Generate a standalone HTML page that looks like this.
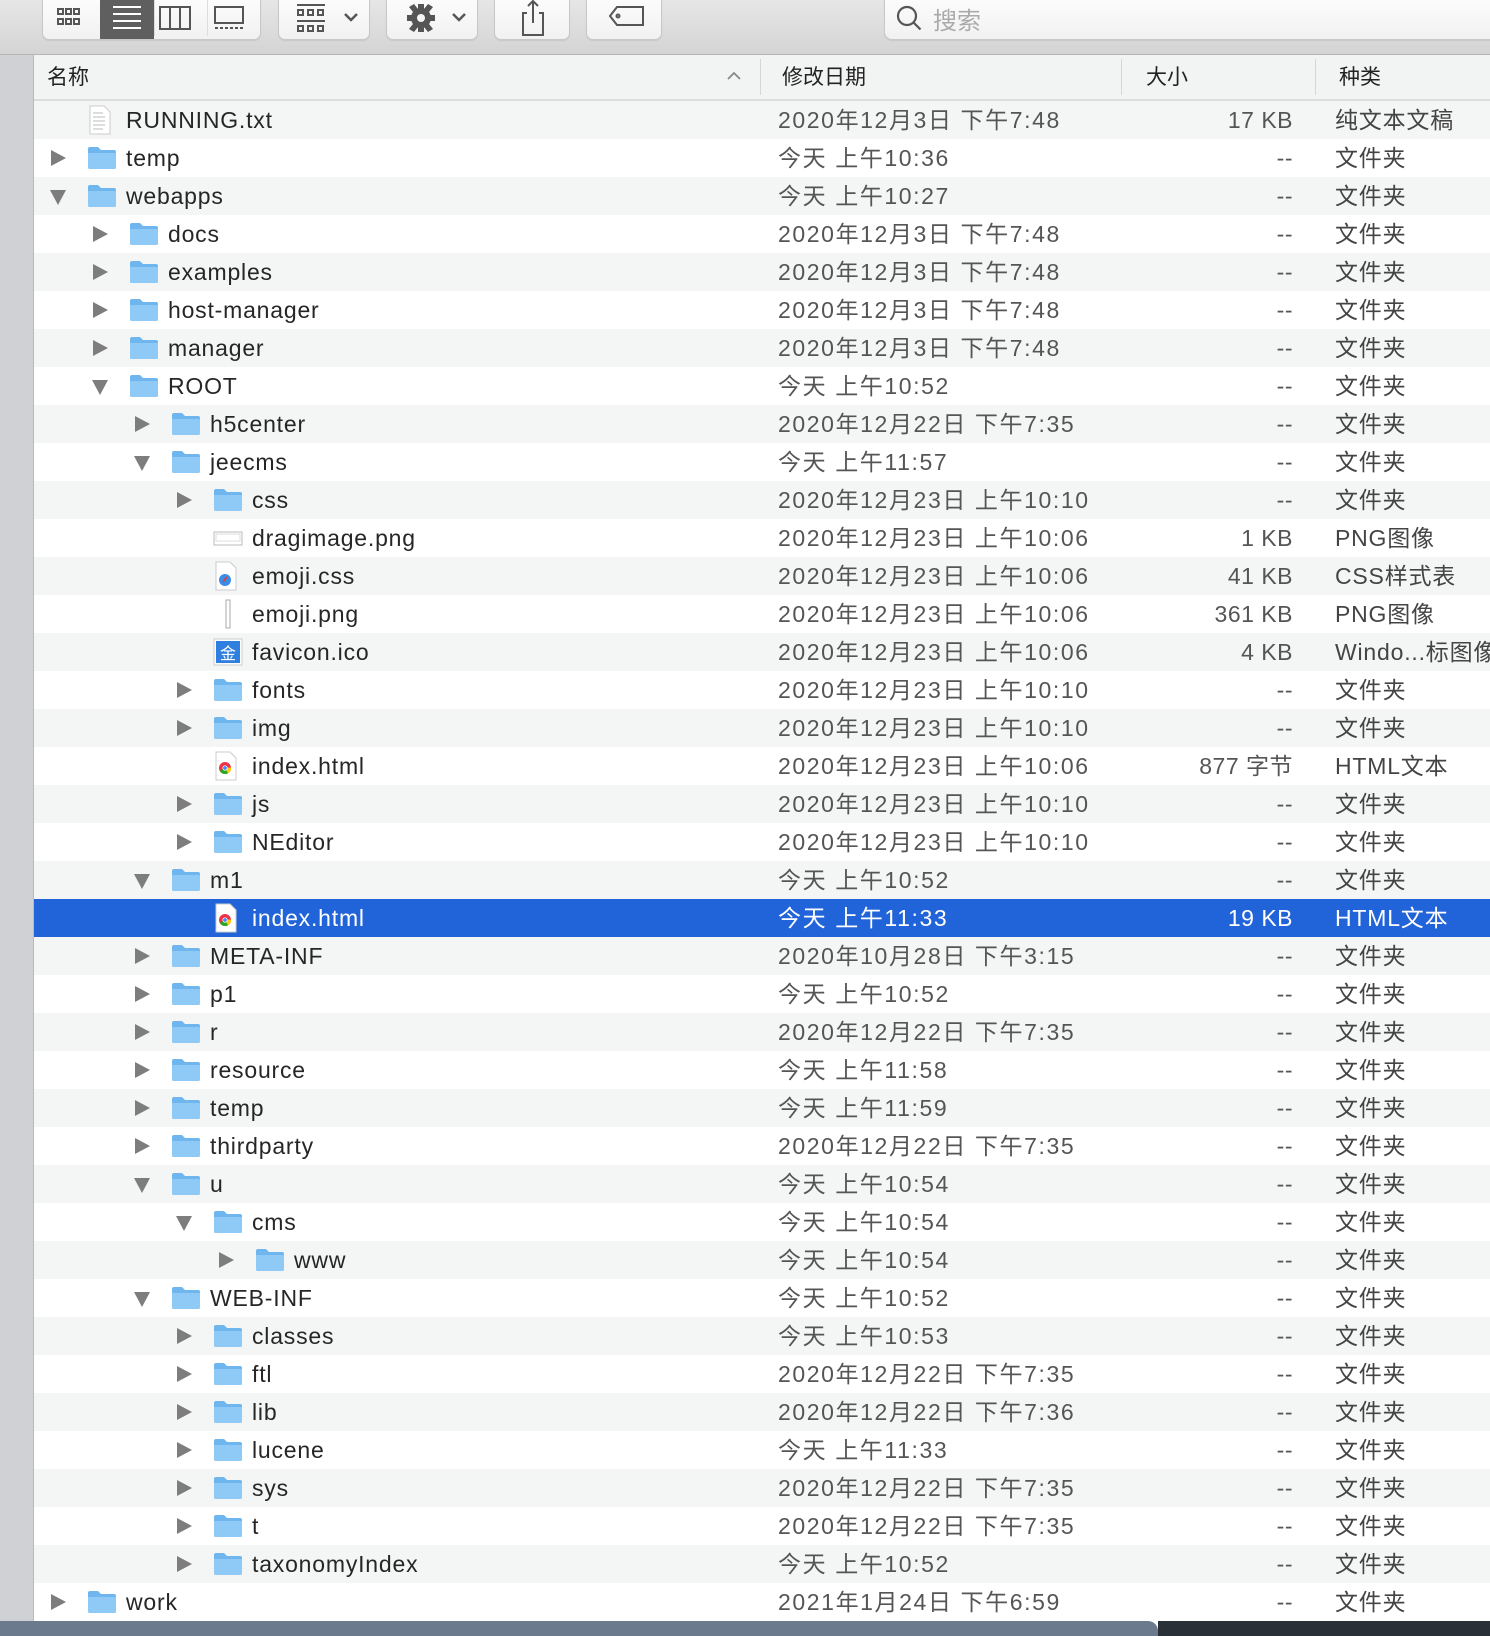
<!DOCTYPE html>
<html><head><meta charset="utf-8"><style>
*{margin:0;padding:0;box-sizing:border-box}
body{width:1490px;height:1636px;overflow:hidden;position:relative;background:#fff;font-family:"Liberation Sans","Noto Sans CJK SC",sans-serif;}
#tb{position:absolute;left:0;top:0;width:1490px;height:55px;background:linear-gradient(#e6e6e6,#d4d4d4);border-bottom:1px solid #b5b5b5}
.btn{position:absolute;top:-4px;height:44px;background:linear-gradient(#fdfdfd,#f1f1f1);border:1px solid #c8c8c8;border-top:none;border-radius:0 0 7px 7px;box-shadow:0 1px 1px rgba(0,0,0,.08)}
#side{position:absolute;left:0;top:55px;width:34px;height:1566px;background:#cfd1d4;border-right:1px solid #b9b9b9}
#hdr{position:absolute;left:34px;top:55px;width:1456px;height:46px;background:#f2f3f3;border-bottom:2px solid #dcdcdc;font-size:21px;color:#222}
#hdr span{position:absolute;top:10px;line-height:26px}
.sep{position:absolute;top:4px;width:1px;height:36px;background:#d6d6d6}
.row{position:absolute;left:34px;width:1456px;height:38px;font-size:23px;color:#262626}
.row.g{background:#f4f5f5}
.row.sel{background:#2163d8;color:#fff}
.row span{position:absolute;top:6px;white-space:nowrap;line-height:26px;height:26px}
.n{letter-spacing:0.8px}
.d{left:744px;color:#555;letter-spacing:1.6px}
.s{right:197px;color:#555;text-align:right;letter-spacing:0.5px}
.k{left:1301px;color:#444;letter-spacing:0.8px}
.sel .d,.sel .s,.sel .k{color:#fff}
.tri{position:absolute;top:11px;width:0;height:0}
.tr{border-left:15px solid #7d7d7d;border-top:8px solid transparent;border-bottom:8px solid transparent}
.td{border-top:15px solid #7d7d7d;border-left:8px solid transparent;border-right:8px solid transparent;top:13px}
.fold{position:absolute;top:7px;width:30px;height:24px}
#dock{position:absolute;left:0;top:1621px;width:1158px;height:15px;background:#6b7a8c;border-radius:0 10px 0 0}
#dbg{position:absolute;left:1158px;top:1621px;width:332px;height:15px;background:#2a3038}
</style></head><body>
<div id="tb">
 <div class="btn" style="left:42px;width:219px;overflow:hidden">
  <div style="position:absolute;left:57px;top:0;width:54px;height:44px;background:#5f5f5f"></div>
  <div style="position:absolute;left:111px;top:4px;width:1px;height:36px;background:#ddd"></div>
  <div style="position:absolute;left:164px;top:4px;width:1px;height:36px;background:#ddd"></div>
  <svg style="position:absolute;left:0;top:0" width="219" height="44" fill="none" stroke="#555" stroke-width="2">
   <g><rect x="15" y="13" width="5" height="5"/><rect x="23" y="13" width="5" height="5"/><rect x="31" y="13" width="5" height="5"/><rect x="15" y="23" width="5" height="5"/><rect x="23" y="23" width="5" height="5"/><rect x="31" y="23" width="5" height="5"/></g>
   <g stroke="#fff"><path d="M70 11h28M70 18h28M70 25h28M70 32h28"/></g>
   <rect x="117" y="11" width="30" height="22"/><path d="M127 11v22M137 11v22"/>
   <rect x="172" y="11" width="28" height="16"/><path d="M172 32h28" stroke-dasharray="3 2"/>
  </svg>
 </div>
 <div class="btn" style="left:278px;width:92px">
  <svg width="92" height="44" fill="none" stroke="#555" stroke-width="2"><path d="M18 9h28M18 25h28"/><rect x="19" y="14" width="5" height="5"/><rect x="29" y="14" width="5" height="5"/><rect x="39" y="14" width="5" height="5"/><rect x="19" y="30" width="5" height="5"/><rect x="29" y="30" width="5" height="5"/><rect x="39" y="30" width="5" height="5"/><path d="M66 18l6 6 6-6" stroke-width="2.5"/></svg>
 </div>
 <div class="btn" style="left:386px;width:92px">
  <svg width="92" height="44"><g fill="#555"><circle cx="34" cy="22" r="10"/><path d="M31 8h6v6h-6zM31 30h6v6h-6zM20 19h6v6h-6zM42 19h6v6h-6zM22 11l5-3 4 5-5 3zM46 11l-5-3-4 5 5 3zM22 33l5 3 4-5-5-3zM46 33l-5 3-4-5 5-3z"/></g><circle cx="34" cy="22" r="4" fill="#f5f5f5"/><path d="M66 18l6 6 6-6" fill="none" stroke="#555" stroke-width="2.5"/></svg>
 </div>
 <div class="btn" style="left:494px;width:76px">
  <svg width="76" height="44" fill="none" stroke="#555" stroke-width="2"><path d="M32 17h-4v22h20v-22h-4M38 5v22M33 10l5-5 5 5"/></svg>
 </div>
 <div class="btn" style="left:586px;width:76px">
  <svg width="76" height="44" fill="none" stroke="#555" stroke-width="2"><path d="M30 11h26v18h-26l-7-9z"/><circle cx="31" cy="20" r="1.5"/></svg>
 </div>
 <div class="btn" style="left:884px;width:620px;border-radius:0 0 8px 8px">
  <svg style="position:absolute;left:10px;top:8px" width="30" height="30" fill="none" stroke="#555" stroke-width="2.2"><circle cx="12" cy="12" r="9"/><path d="M18.5 18.5l7 7"/></svg>
  <span style="position:absolute;left:48px;top:5px;font-size:24px;color:#aaa">搜索</span>
 </div>
</div>
<div id="side"></div>
<div id="hdr">
 <span style="left:13px">名称</span>
 <svg style="position:absolute;left:693px;top:16px" width="14" height="10" fill="none" stroke="#888" stroke-width="1.8"><path d="M1 8l6-6 6 6"/></svg>
 <div class="sep" style="left:726px"></div><span style="left:748px">修改日期</span>
 <div class="sep" style="left:1087px"></div><span style="left:1112px">大小</span>
 <div class="sep" style="left:1281px"></div><span style="left:1305px">种类</span>
</div>
<div id="rows"></div>
<div id="dock"></div><div id="dbg"></div>
<script>
var F='文件夹';
var R=[
[0,'','txt','RUNNING.txt','2020年12月3日 下午7:48','17 KB','纯文本文稿'],
[0,'r','f','temp','今天 上午10:36','--',F],
[0,'d','f','webapps','今天 上午10:27','--',F],
[1,'r','f','docs','2020年12月3日 下午7:48','--',F],
[1,'r','f','examples','2020年12月3日 下午7:48','--',F],
[1,'r','f','host-manager','2020年12月3日 下午7:48','--',F],
[1,'r','f','manager','2020年12月3日 下午7:48','--',F],
[1,'d','f','ROOT','今天 上午10:52','--',F],
[2,'r','f','h5center','2020年12月22日 下午7:35','--',F],
[2,'d','f','jeecms','今天 上午11:57','--',F],
[3,'r','f','css','2020年12月23日 上午10:10','--',F],
[3,'','png','dragimage.png','2020年12月23日 上午10:06','1 KB','PNG图像'],
[3,'','css','emoji.css','2020年12月23日 上午10:06','41 KB','CSS样式表'],
[3,'','bar','emoji.png','2020年12月23日 上午10:06','361 KB','PNG图像'],
[3,'','ico','favicon.ico','2020年12月23日 上午10:06','4 KB','Windo...标图像'],
[3,'r','f','fonts','2020年12月23日 上午10:10','--',F],
[3,'r','f','img','2020年12月23日 上午10:10','--',F],
[3,'','html','index.html','2020年12月23日 上午10:06','877 字节','HTML文本'],
[3,'r','f','js','2020年12月23日 上午10:10','--',F],
[3,'r','f','NEditor','2020年12月23日 上午10:10','--',F],
[2,'d','f','m1','今天 上午10:52','--',F],
[3,'','html','index.html','今天 上午11:33','19 KB','HTML文本'],
[2,'r','f','META-INF','2020年10月28日 下午3:15','--',F],
[2,'r','f','p1','今天 上午10:52','--',F],
[2,'r','f','r','2020年12月22日 下午7:35','--',F],
[2,'r','f','resource','今天 上午11:58','--',F],
[2,'r','f','temp','今天 上午11:59','--',F],
[2,'r','f','thirdparty','2020年12月22日 下午7:35','--',F],
[2,'d','f','u','今天 上午10:54','--',F],
[3,'d','f','cms','今天 上午10:54','--',F],
[4,'r','f','www','今天 上午10:54','--',F],
[2,'d','f','WEB-INF','今天 上午10:52','--',F],
[3,'r','f','classes','今天 上午10:53','--',F],
[3,'r','f','ftl','2020年12月22日 下午7:35','--',F],
[3,'r','f','lib','2020年12月22日 下午7:36','--',F],
[3,'r','f','lucene','今天 上午11:33','--',F],
[3,'r','f','sys','2020年12月22日 下午7:35','--',F],
[3,'r','f','t','2020年12月22日 下午7:35','--',F],
[3,'r','f','taxonomyIndex','今天 上午10:52','--',F],
[0,'r','f','work','2021年1月24日 下午6:59','--',F]];
var fold='<svg class="fold" viewBox="0 0 30 24"><path d="M1 3a2 2 0 0 1 2-2h8l3 3h13a2 2 0 0 1 2 2v15a2 2 0 0 1-2 2H3a2 2 0 0 1-2-2z" fill="#6fb6ee"/><path d="M1 7h28v14a2 2 0 0 1-2 2H3a2 2 0 0 1-2-2z" fill="#8fcaf6"/></svg>';
function icon(t){
 if(t=='f')return fold;
 var doc='<svg class="fold" style="width:26px;height:30px;top:4px" viewBox="0 0 26 30"><path d="M3 1h14l6 6v22H3z" fill="#fff" stroke="#ccc"/>';
 if(t=='txt')return doc+'<path d="M6 8h10M6 12h12M6 16h12M6 20h12M6 24h10" stroke="#bbb"/></svg>';
 if(t=='css')return doc+'<circle cx="12" cy="19" r="6" fill="#3a8ee6"/><path d="M10 21l4-5" stroke="#e33" stroke-width="1.5"/></svg>';
 if(t=='html')return doc+'<circle cx="12" cy="17" r="6" fill="#e34"/><path d="M12 17L6.8 20A6 6 0 0 0 15 22.2z" fill="#2a2"/><path d="M12 17l6-0.5A6 6 0 0 1 15 22.2z" fill="#fc0"/><circle cx="12" cy="17" r="2.6" fill="#fff"/><circle cx="12" cy="17" r="1.9" fill="#48f"/></svg>';
 if(t=='png')return '<svg class="fold" viewBox="0 0 30 24"><rect x="1" y="6" width="28" height="13" fill="#fff" stroke="#bbb"/><rect x="3" y="8" width="24" height="7" fill="none" stroke="#ddd"/></svg>';
 if(t=='bar')return '<svg class="fold" style="height:30px;top:4px" viewBox="0 0 30 30"><rect x="13" y="1" width="4" height="28" fill="#fff" stroke="#aaa"/></svg>';
 if(t=='ico')return '<svg class="fold" style="height:28px;top:5px" viewBox="0 0 30 28"><rect x="1" y="1" width="28" height="26" fill="#fff" stroke="#ccc"/><rect x="3" y="3" width="24" height="22" fill="#2f7fe0"/><text x="15" y="21" font-size="16" fill="#fff" text-anchor="middle" font-family="Noto Sans CJK SC">金</text></svg>';
}
var h='';
R.forEach(function(r,i){
 var cls='row'+(i==21?' sel':(i%2==0?' g':''));
 var x=r[0]*42;
 h+='<div class="'+cls+'" style="top:'+(101+i*38)+'px">';
 if(r[1])h+='<div class="tri '+(r[1]=='r'?'tr':'td')+'" style="left:'+(17+x-(r[1]=='d'?1:0))+'px"></div>';
 h+='<div style="position:absolute;left:'+(53+x)+'px;top:0">'+icon(r[2])+'</div>';
 h+='<span class="n" style="left:'+(92+x)+'px">'+r[3]+'</span><span class="d">'+r[4]+'</span><span class="s">'+r[5]+'</span><span class="k">'+r[6]+'</span></div>';
});
document.getElementById('rows').innerHTML=h;
</script>
</body></html>
